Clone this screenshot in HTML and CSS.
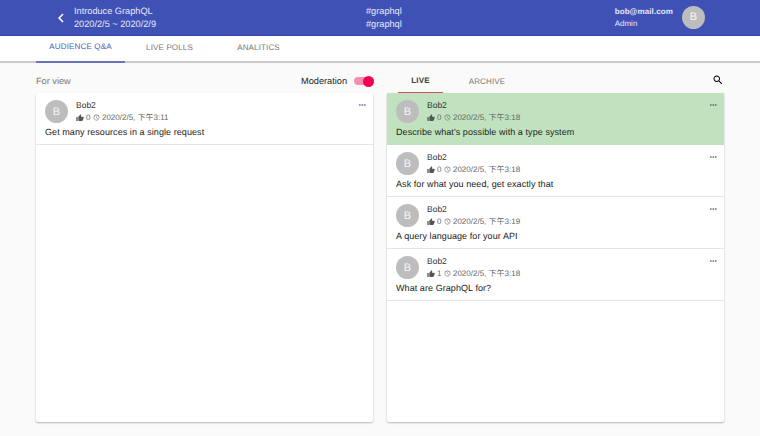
FILE: index.html
```html
<!DOCTYPE html>
<html lang="zh">
<head>
<meta charset="utf-8">
<title>Audience Q&amp;A</title>
<link rel="stylesheet" href="styles.css">
</head>
<body>
<header class="appbar">
  <div class="appbar-left">
    <svg class="back" viewBox="0 0 24 24" width="18" height="18"><path d="M15.41 7.41 14 6l-6 6 6 6 1.41-1.41L10.83 12z" fill="#fff"/></svg>
    <div class="event"><div>Introduce GraphQL</div><div>2020/2/5 ~ 2020/2/9</div></div>
  </div>
  <div class="appbar-mid"><div>#graphql</div><div>#graphql</div></div>
  <div class="appbar-user">
    <div class="user-text"><div class="email">bob@mail.com</div><div>Admin</div></div>
    <div class="avatar avatar-user">B</div>
  </div>
</header>
<nav class="tabs">
  <div class="tab tab-active">AUDIENCE Q&amp;A</div>
  <div class="tab">LIVE POLLS</div>
  <div class="tab">ANALITICS</div>
</nav>
<main class="columns">
  <section class="col">
    <div class="col-head">
      <span class="for-view">For view</span>
      <div class="moderation">
        <span>Moderation</span>
        <span class="switch"><span class="thumb"></span></span>
      </div>
    </div>
    <div class="card">
      <article class="q">
        <div class="q-top">
          <div class="avatar">B</div>
          <div class="q-meta">
            <div class="q-name">Bob2</div>
            <div class="q-info">
              <svg class="ico" viewBox="0 0 24 24"><path d="M1 21h4V9H1v12zm22-11c0-1.1-.9-2-2-2h-6.31l.95-4.57.03-.32c0-.41-.17-.79-.44-1.06L14.17 1 7.59 7.59C7.22 7.95 7 8.45 7 9v10c0 1.1.9 2 2 2h9c.83 0 1.54-.5 1.84-1.22l3.02-7.05c.09-.23.14-.47.14-.73v-2z"/></svg><span class="count">0</span>
              <svg class="ico clock" viewBox="0 0 24 24"><path d="M11.99 2C6.47 2 2 6.48 2 12s4.47 10 9.99 10C17.52 22 22 17.52 22 12S17.52 2 11.99 2zM12 20c-4.42 0-8-3.58-8-8s3.58-8 8-8 8 3.58 8 8-3.58 8-8 8zm.5-13H11v6l5.25 3.15.75-1.23-4.5-2.67z"/></svg><span>2020/2/5, 下午3:11</span>
            </div>
          </div>
          <span class="more">···</span>
        </div>
        <p class="q-text">Get many resources in a single request</p>
      </article>
    </div>
  </section>
  <section class="col">
    <div class="col-head col-head-right">
      <div class="subtabs">
        <div class="subtab subtab-active">LIVE</div>
        <div class="subtab">ARCHIVE</div>
      </div>
      <svg class="search" viewBox="0 0 24 24" width="12" height="12"><path d="M15.5 14h-.79l-.28-.27C15.41 12.59 16 11.11 16 9.5 16 5.91 13.09 3 9.5 3S3 5.91 3 9.5 5.91 16 9.5 16c1.61 0 3.09-.59 4.23-1.57l.27.28v.79l5 4.99L20.49 19l-4.99-5zm-6 0C7.01 14 5 11.99 5 9.5S7.01 5 9.5 5 14 7.01 14 9.5 11.99 14 9.5 14z"/></svg>
    </div>
    <div class="card">
      <article class="q q-green">
        <div class="q-top">
          <div class="avatar">B</div>
          <div class="q-meta">
            <div class="q-name">Bob2</div>
            <div class="q-info">
              <svg class="ico" viewBox="0 0 24 24"><path d="M1 21h4V9H1v12zm22-11c0-1.1-.9-2-2-2h-6.31l.95-4.57.03-.32c0-.41-.17-.79-.44-1.06L14.17 1 7.59 7.59C7.22 7.95 7 8.45 7 9v10c0 1.1.9 2 2 2h9c.83 0 1.54-.5 1.84-1.22l3.02-7.05c.09-.23.14-.47.14-.73v-2z"/></svg><span class="count">0</span>
              <svg class="ico clock" viewBox="0 0 24 24"><path d="M11.99 2C6.47 2 2 6.48 2 12s4.47 10 9.99 10C17.52 22 22 17.52 22 12S17.52 2 11.99 2zM12 20c-4.42 0-8-3.58-8-8s3.58-8 8-8 8 3.58 8 8-3.58 8-8 8zm.5-13H11v6l5.25 3.15.75-1.23-4.5-2.67z"/></svg><span>2020/2/5, 下午3:18</span>
            </div>
          </div>
          <span class="more">···</span>
        </div>
        <p class="q-text">Describe what's possible with a type system</p>
      </article>
      <article class="q">
        <div class="q-top">
          <div class="avatar">B</div>
          <div class="q-meta">
            <div class="q-name">Bob2</div>
            <div class="q-info">
              <svg class="ico" viewBox="0 0 24 24"><path d="M1 21h4V9H1v12zm22-11c0-1.1-.9-2-2-2h-6.31l.95-4.57.03-.32c0-.41-.17-.79-.44-1.06L14.17 1 7.59 7.59C7.22 7.95 7 8.45 7 9v10c0 1.1.9 2 2 2h9c.83 0 1.54-.5 1.84-1.22l3.02-7.05c.09-.23.14-.47.14-.73v-2z"/></svg><span class="count">0</span>
              <svg class="ico clock" viewBox="0 0 24 24"><path d="M11.99 2C6.47 2 2 6.48 2 12s4.47 10 9.99 10C17.52 22 22 17.52 22 12S17.52 2 11.99 2zM12 20c-4.42 0-8-3.58-8-8s3.58-8 8-8 8 3.58 8 8-3.58 8-8 8zm.5-13H11v6l5.25 3.15.75-1.23-4.5-2.67z"/></svg><span>2020/2/5, 下午3:18</span>
            </div>
          </div>
          <span class="more">···</span>
        </div>
        <p class="q-text">Ask for what you need, get exactly that</p>
      </article>
      <article class="q">
        <div class="q-top">
          <div class="avatar">B</div>
          <div class="q-meta">
            <div class="q-name">Bob2</div>
            <div class="q-info">
              <svg class="ico" viewBox="0 0 24 24"><path d="M1 21h4V9H1v12zm22-11c0-1.1-.9-2-2-2h-6.31l.95-4.57.03-.32c0-.41-.17-.79-.44-1.06L14.17 1 7.59 7.59C7.22 7.95 7 8.45 7 9v10c0 1.1.9 2 2 2h9c.83 0 1.54-.5 1.84-1.22l3.02-7.05c.09-.23.14-.47.14-.73v-2z"/></svg><span class="count">0</span>
              <svg class="ico clock" viewBox="0 0 24 24"><path d="M11.99 2C6.47 2 2 6.48 2 12s4.47 10 9.99 10C17.52 22 22 17.52 22 12S17.52 2 11.99 2zM12 20c-4.42 0-8-3.58-8-8s3.58-8 8-8 8 3.58 8 8-3.58 8-8 8zm.5-13H11v6l5.25 3.15.75-1.23-4.5-2.67z"/></svg><span>2020/2/5, 下午3:19</span>
            </div>
          </div>
          <span class="more">···</span>
        </div>
        <p class="q-text">A query language for your API</p>
      </article>
      <article class="q">
        <div class="q-top">
          <div class="avatar">B</div>
          <div class="q-meta">
            <div class="q-name">Bob2</div>
            <div class="q-info">
              <svg class="ico" viewBox="0 0 24 24"><path d="M1 21h4V9H1v12zm22-11c0-1.1-.9-2-2-2h-6.31l.95-4.57.03-.32c0-.41-.17-.79-.44-1.06L14.17 1 7.59 7.59C7.22 7.95 7 8.45 7 9v10c0 1.1.9 2 2 2h9c.83 0 1.54-.5 1.84-1.22l3.02-7.05c.09-.23.14-.47.14-.73v-2z"/></svg><span class="count">1</span>
              <svg class="ico clock" viewBox="0 0 24 24"><path d="M11.99 2C6.47 2 2 6.48 2 12s4.47 10 9.99 10C17.52 22 22 17.52 22 12S17.52 2 11.99 2zM12 20c-4.42 0-8-3.58-8-8s3.58-8 8-8 8 3.58 8 8-3.58 8-8 8zm.5-13H11v6l5.25 3.15.75-1.23-4.5-2.67z"/></svg><span>2020/2/5, 下午3:18</span>
            </div>
          </div>
          <span class="more">···</span>
        </div>
        <p class="q-text">What are GraphQL for?</p>
      </article>
    </div>
  </section>
</main>
</body>
</html>
```
FILE: styles.css
```css
* { box-sizing: border-box; }
html, body { height: 100%; }
body {
  margin: 0;
  width: 760px;
  height: 436px;
  overflow: hidden;
  background: #fafafa;
  font-family: "Liberation Sans", "Noto Sans CJK TC", sans-serif;
  font-size: 10px;
  color: #222;
  display: flex;
  flex-direction: column;
  text-rendering: geometricPrecision;
}
.appbar {
  height: 36px;
  flex: none;
  background: #3f51b5;
  border-bottom: 1px solid #34459f;
  color: #e8eaf6;
  display: grid;
  grid-template-columns: 366px 1fr auto;
  align-items: center;
  line-height: 13.5px;
  font-size: 9.2px;
}
.appbar-left { display: flex; align-items: center; padding-left: 52px; gap: 4px; }
.event, .appbar-mid { padding-top: 1px; }
.back { flex: none; }
.appbar-user { display: flex; align-items: center; padding-right: 55px; gap: 10px; }
.user-text { line-height: 12px; font-size: 8px; margin-right: -1px; padding-left: 1px; }
.email { font-weight: 700; letter-spacing: .1px; }
.avatar {
  width: 23px;
  height: 23px;
  border-radius: 50%;
  background: #bdbdbd;
  color: #f5f5f5;
  font-size: 11px;
  display: flex;
  align-items: center;
  justify-content: center;
  flex: none;
}
.tabs {
  height: 27px;
  flex: none;
  background: #fff;
  display: flex;
  padding-left: 36px;
  border-bottom: 2px solid #c9c9c9;
  font-size: 8px;
  letter-spacing: .15px;
}
.tab {
  width: 89px;
  height: 27px;
  display: flex;
  align-items: center;
  justify-content: center;
  color: #777;
  padding-bottom: 4px;
}
.tab-active { color: #4c5cb8; border-bottom: 2px solid #6a74b5; }
.columns {
  display: flex;
  gap: 14px;
  padding: 0 36px 14px;
  flex: 1;
  min-height: 0;
}
.col { flex: 1; min-width: 0; display: flex; flex-direction: column; }
.col-head {
  height: 30px;
  flex: none;
  display: flex;
  align-items: center;
  justify-content: space-between;
  font-size: 9.2px;
  color: #777;
  padding-top: 6px;
}
.moderation { display: flex; align-items: center; gap: 7px; color: #222; }
.switch {
  width: 20px;
  height: 8px;
  border-radius: 4px;
  background: #f48fb1;
  display: flex;
  justify-content: flex-end;
  align-items: center;
  margin-right: -1px;
}
.thumb { width: 11px; height: 11px; border-radius: 50%; background: #f50057; }
.col-head-right { padding: 0; align-items: stretch; }
.subtabs { display: flex; font-size: 8px; letter-spacing: .15px; }
.subtab {
  width: 45px;
  margin-left: 11px;
  display: flex;
  align-items: center;
  justify-content: center;
  color: #777;
  padding-top: 6px;
}
.subtab + .subtab { margin-left: 14px; width: 60px; }
.subtab-active { color: #444; font-weight: 700; border-bottom: 1px solid #d0505f; }
.search { align-self: center; margin: 4px 0 0; }
.card {
  flex: 1;
  background: #fff;
  border-radius: 2px;
  box-shadow: 0 1px 2px rgba(0,0,0,.28);
  min-height: 0;
}
.q {
  height: 52px;
  padding: 7px 8px 0 9px;
  border-bottom: 1px solid #e6e6e6;
}
.q-green { background: #c0e2bf; border-bottom-color: #c0e2bf; }
.q-top { display: flex; gap: 8px; height: 24px; }
.q-meta { flex: 1; min-width: 0; }
.q-name { font-size: 8.5px; line-height: 11px; color: #333; }
.q-info {
  display: flex;
  align-items: center;
  font-size: 8px;
  line-height: 11px;
  color: #666;
  margin-top: 1px;
}
.ico { width: 8px; height: 8px; fill: #555; margin-right: 2px; flex: none; }
.clock { width: 7px; height: 7px; margin: 0 1.5px 0 3px; fill: #777; }
.more { font-size: 9px; line-height: 10px; color: #444; letter-spacing: -.5px; font-weight: 700; margin-right: -1px; }
.q-text { margin: 2px 0 0; font-size: 9px; line-height: 12px; color: #222; letter-spacing: .07px; }
```
